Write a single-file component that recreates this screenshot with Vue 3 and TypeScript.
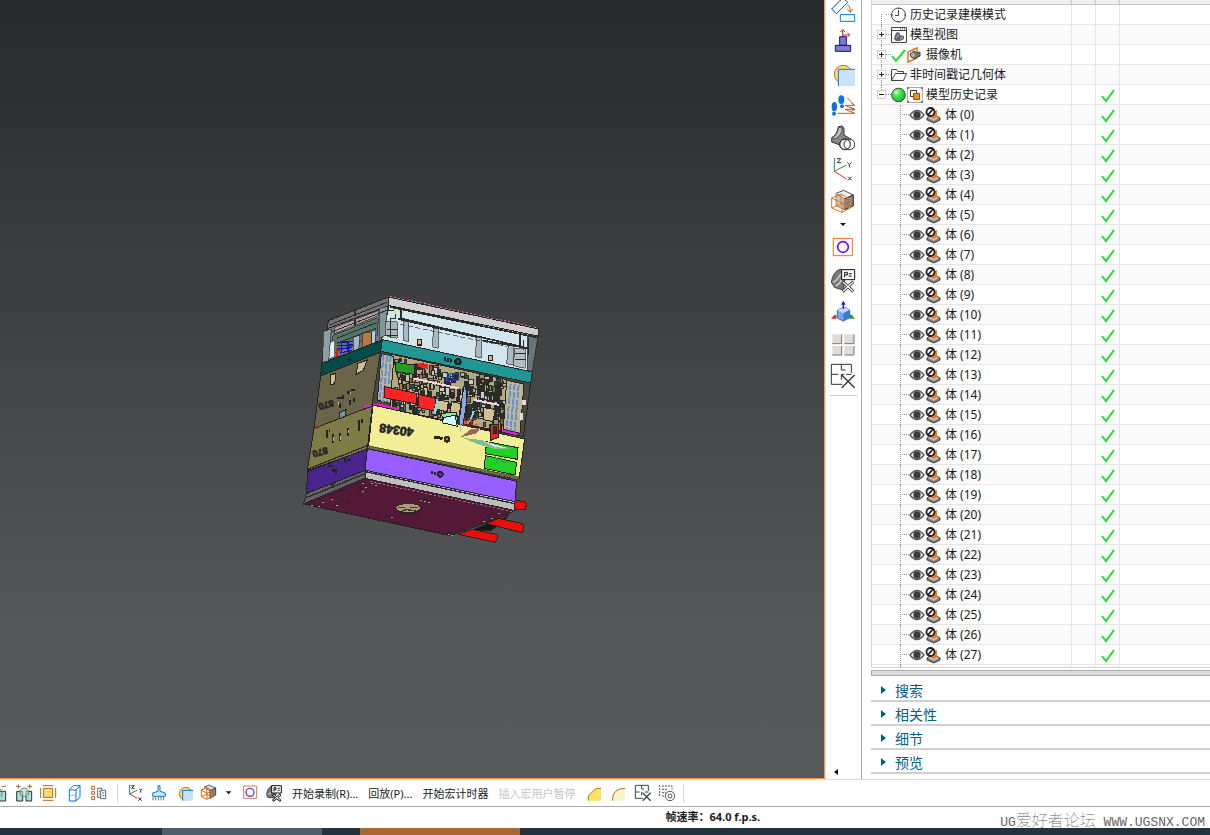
<script setup lang="ts">
interface Speck { x: number; y: number; w: number; h: number; fill: string }

const bodies: number[] = Array.from({ length: 28 }, (_, i) => i)
const sections: string[] = ['搜索', '相关性', '细节', '预览']

// Small machine parts seen through the open middle of the mould.
function buildSpecks(count: number): Speck[] {
  const fills = ['#2b2b2b', '#2b2b2b', '#d0c294', '#2b2b2b', '#9a8f68', '#d0c294', '#c9752e', '#0e5a5a', '#c8ccc8', '#2b2b2b', '#6d6650', '#b8ab80']
  let seed = 41
  const next = (): number => {
    seed = (seed * 1103515245 + 12345) % 2147483648
    return seed / 2147483648
  }
  return Array.from({ length: count }, () => {
    const u = next()
    const v = next()
    return {
      x: Math.round(308 + u * 335),
      y: Math.round(214 + u * 70 + v * 145),
      w: Math.round(5 + next() * 10),
      h: Math.round(6 + next() * 20),
      fill: fills[Math.floor(next() * fills.length)],
    }
  })
}
const specks = buildSpecks(300)
const bottomSpecks: number[][] = [
  [60, 655], [82, 659], [92, 647], [120, 638], [148, 642], [170, 651], [136, 655], [212, 614], [222, 602], [228, 618], [205, 606], [240, 590],
  [252, 596], [214, 589], [400, 643], [412, 646], [386, 640], [285, 690], [300, 692], [590, 690], [606, 684], [620, 680], [575, 703], [600, 695], [480, 745], [470, 742],
]
const sideMarks: number[][] = [
  [140, 335, 16, 8], [155, 330, 6, 12], [172, 318, 8, 8], [184, 313, 12, 5], [178, 345, 5, 14], [190, 340, 6, 12], [147, 355, 5, 14],
  [108, 436, 6, 24], [116, 432, 5, 10], [126, 448, 7, 26], [148, 445, 6, 22], [172, 430, 6, 24], [205, 405, 5, 32], [212, 402, 6, 12],
  [115, 540, 14, 5], [125, 552, 14, 8], [135, 548, 5, 18], [163, 516, 6, 18], [170, 522, 14, 5],
]
</script>

<template>
  <div class="app">
    <main class="workspace">
      <section class="viewport" aria-label="图形窗口">
        <svg class="model" viewBox="0 0 780 810" width="260" height="270" shape-rendering="crispEdges">
          <g stroke="#242424" stroke-width="3" stroke-linejoin="round">
            <path d="M548 735 600 712 640 700 655 690 640 712 600 738Z" fill="#1c1715" />
            <path d="M675 645 706 651Q712 663 704 675L672 672Z" fill="#f00b0b" />
            <path d="M590 716 625 700 698 716Q704 730 696 743Z" fill="#f00b0b" />
            <path d="M505 748 545 733 620 748Q626 760 616 772Z" fill="#f00b0b" />
            <path d="M112 130 297 60 275 165 95 235Z" fill="#71797b" />
            <path d="M297 60 745 150 725 262 275 165Z" fill="#d2e6ee" />
            <path d="M115 107 295 36 297 62 112 131Z" fill="#727272" />
            <path d="M295 36 746 132 744 153 297 62Z" fill="#cfcfcf" />
          </g>
          <g stroke="#2b2b2b" stroke-width="2">
            <path d="M132 128 267 76 265 92 134 146Z" fill="#b39da5" />
            <path d="M128 152 265 98 262 150 128 205Z" fill="#567468" />
            <path d="M110 176 134 166 134 215 106 226Z" fill="#e6eef2" />
            <path d="M268 70 292 64 288 150 268 160Z" fill="#84959a" />
            <path d="M100 140 124 132 116 228 98 232Z" fill="#8b9fa4" />
            <path d="M216 145Q230 138 244 143V180L216 190Z" fill="#bd793c" />
            <path d="M190 157 210 150 206 194 190 197Z" fill="#9fb7c4" />
            <path d="M245 140 257 134 256 172 245 177Z" fill="#a9d1ec" />
            <path d="M286 110H322V160L286 152Z" fill="#aab6bd" />
            <path d="M342 108H356V170L340 166ZM430 130H445V190L428 186ZM560 158H574V218L556 215ZM655 178H670V240L650 236Z" fill="#aabac3" />
            <path d="M674 190H706V250L670 242Z" fill="#b0bfc4" />
            <path d="M712 150 744 154 726 260 712 256Z" fill="#66757a" />
          </g>
          <g fill="none" stroke="#2b2b2b" stroke-width="3">
            <path d="M140 160 262 112M140 175 258 130M118 120 290 52M125 141 290 76" />
            <path d="M300 66 744 158" stroke-width="5" />
            <path d="M332 72V100L690 184V150" stroke-width="5" />
            <path d="M325 102 560 156M575 166 715 190" stroke-width="5" />
            <path d="M330 118 650 184" stroke-width="2" stroke-dasharray="16 7" />
            <path d="M290 75H315V100H300V160M290 132H324M288 150H324M676 205H708M674 222H708M716 160V210M700 165V195" />
            <path d="M194 75V92M196 100V124" stroke-width="6" />
          </g>
          <path d="M299 34 745 129" stroke="#ef6b9f" stroke-width="3" stroke-dasharray="6 7" />
          <path d="M146 172 188 170M140 182 190 180M142 192 186 188M150 204 186 196M154 167V205M174 167V202" stroke="#1712c5" stroke-width="4" />
          <path d="M140 190V215" stroke="#db1717" stroke-width="5" />
          <path d="M311 72h10v16h-10z" fill="#e1e58a" />
          <g fill="#e0b080" stroke="#242424" stroke-width="4"><path d="M383 164h12v16h-12zM596 211h12v16h-12z" /></g>

          <g stroke="#242424" stroke-width="3" stroke-linejoin="round">
            <path d="M92 273 272 200 245 365 72 430Z" fill="#6b6449" />
            <path d="M272 198 722 293 700 455 245 365Z" fill="#4a4a45" />
            <path d="M305 208 650 284 645 442 300 372Z" fill="#b3a880" />
          </g>
          <g stroke="#2b2b2b" stroke-width="3">
            <rect v-for="(s, i) in specks" :key="i" :x="s.x" :y="s.y" :width="s.w" :height="s.h" :fill="s.fill" />
          </g>
          <g stroke="#242424" stroke-width="3" stroke-linejoin="round">
            <path d="M95 236 277 164 273 201 92 273Z" fill="#044b4a" />
            <path d="M277 164 727 261 722 294 272 199Z" fill="#219694" />
            <path d="M274 206 312 214 300 355 262 345Z" fill="#c1b58b" />
            <path d="M650 286 702 297 690 445 640 432Z" fill="#c1b58b" />
            <path d="M316 232 372 240V268L316 260Z" fill="#249b24" />
            <path d="M440 345 475 350 470 380 436 372ZM484 350 512 356 508 396 482 380Z" fill="#cfc193" />
            <path d="M582 368 616 374 608 410 580 404Z" fill="#cfc193" />
          </g>
          <g stroke="#5f90e8" stroke-width="6" stroke-dasharray="18 4">
            <path d="M280 210 270 345M291 212 280 350M302 214 292 350M662 296 650 434M674 298 662 437M686 300 674 440" />
          </g>
          <path d="M695 345h14v14h-14zM690 385h8v20h-8z" fill="#e4dada" />
          <path d="M385 233 414 238V252L385 246Z" fill="#ee2020" />
          <path d="M370 280 505 310M552 345 628 360" stroke="#f3d6e4" stroke-width="6" />
          <g stroke="#242424" stroke-width="3">
            <path d="M284 305 380 325V357L282 338Z" fill="#ff2323" />
            <path d="M385 328 438 340 433 378 384 367Z" fill="#ff2323" />
            <path d="M455 385 498 382 504 410 458 405Z" fill="#9ce0a0" />
            <path d="M522 302Q532 310 530 350L518 430 510 425 514 350Z" fill="#8aa6e5" />
            <path d="M120 270 138 265 134 296 120 300Z" fill="#cdbd90" />
            <path d="M204 235 232 225 220 256 198 268Z" fill="#cdbd90" />
            <path d="M150 382 168 374 163 408 148 412Z" fill="#6b9aa5" />
          </g>
          <path d="M430 385 440 342 444 346 438 388ZM536 410 548 382 556 375 542 412Z" fill="#68e7ea" />
          <path d="M225 364H242L262 358 324 372" fill="none" stroke="#f218dc" stroke-width="6" />

          <g stroke="#242424" stroke-width="3" stroke-linejoin="round">
            <path d="M72 430 247 363 232 492 52 557Z" fill="#7e7b46" />
            <path d="M249 360 704 462 687 582 235 490Z" fill="#f1ee96" />
            <path d="M52 560 232 491 226 557 50 625Z" fill="#4a248d" />
            <path d="M232 491 680 589 675 650 225 556Z" fill="#975fff" />
            <path d="M50 625 226 556 225 582 40 657Z" fill="#616161" />
            <path d="M226 556 675 650 672 678 225 582Z" fill="#bfbfbf" />
            <path d="M40 657 225 580 672 676 650 690 480 752Z" fill="#531936" />
          </g>
          <path d="M636 437 680 447" stroke="#f218dc" stroke-width="6" />
          <g fill="none" stroke="#2b2b2b" stroke-width="4">
            <path d="M234 486 688 580" stroke="#706b3b" stroke-width="7" />
            <path d="M234 482 688 576M234 492 688 586" stroke-width="2" />
            <path d="M226 560 674 656M54 552 232 482M44 640 225 566" />
            <path d="M240 590 670 680" stroke="#e28daf" stroke-width="2" stroke-dasharray="7 6" />
            <path d="M60 655 215 593M62 660 480 750" stroke="#302029" stroke-width="3" stroke-dasharray="20 5" />
          </g>
          <g v-for="(b, i) in bottomSpecks" :key="'b' + i">
            <rect :x="b[0]" :y="b[1]" width="10" height="6" fill="#292426" />
            <rect :x="b[0] + 3" :y="b[1] + 5" width="6" height="2" fill="#d58aa8" />
          </g>
          <rect v-for="(m, i) in sideMarks" :key="'m' + i" :x="m[0]" :y="m[1]" :width="m[2]" :height="m[3]" fill="#252525" />
          <path d="M130 456v12M152 452v12M176 434v10M182 320v8M146 350v10" stroke="#c8ba83" stroke-width="4" />
          <path d="M78 430 90 424" stroke="#b62626" stroke-width="5" />
          <text class="engraved side-mark" transform="translate(128 344) rotate(164)">870</text>
          <text class="engraved side-mark" transform="translate(110 486) rotate(164)">870</text>
          <text class="engraved number" transform="translate(372 430) rotate(188)">40348</text>
          <path d="M462 222 488 228" stroke="#242424" stroke-width="13" stroke-dasharray="6 3" />
          <circle cx="504" cy="230" r="11" fill="#252525" />
          <circle cx="504" cy="230" r="4" fill="#1a6b6c" />
          <path d="M433 457 458 460M423 563 446 567" stroke="#242424" stroke-width="9" stroke-dasharray="7 2" />
          <circle cx="471" cy="463" r="10" fill="#302f23" /><circle cx="471" cy="463" r="4" fill="#9b9460" />
          <circle cx="451" cy="568" r="10" fill="#26213c" /><circle cx="451" cy="568" r="4" fill="#633bae" />
          <path d="M172 222 184 216V228L174 232Z" fill="#153131" />
          <path d="M120 598 134 594 130 612Z" fill="#303030" />
          <ellipse cx="355" cy="673" rx="37" ry="15" fill="#282522" />
          <ellipse cx="355" cy="669" rx="36" ry="12" fill="#aa9d74" />
          <path d="M324 668H346M360 668H384M335 677 350 674 378 677" fill="none" stroke="#403a2b" stroke-width="4" />
          <g stroke="#242424" stroke-width="3">
            <path d="M590 470 684 488 682 523 586 506Z" fill="#22d123" />
            <path d="M586 512 680 532 675 570 583 550Z" fill="#22d123" />
            <path d="M603 417H624V458L602 466Z" fill="#e12424" />
            <path d="M609 425H618V445H609Z" fill="#333" />
            <path d="M462 397 495 391 502 424 456 413Z" fill="#c7fff9" />
          </g>
          <path d="M511 457 545 431 570 430 560 445Z" fill="#99665d" />
          <path d="M519 459 575 465 620 480 660 491 620 493 570 480Z" fill="#82bd91" />
          <path d="M575 466 620 480 658 490 615 486Z" fill="#c9f0d0" />
          <path d="M511 390V440" stroke="#9eb5f2" stroke-width="5" />
          <text class="axis" x="466" y="287" fill="#1b4fe3">ZC</text>
          <text class="axis" x="517" y="422" fill="#df2424">XC</text>
          <text class="axis" x="610" y="533" fill="#31a43a">YC</text>
        </svg>
      </section>

      <nav class="rail" aria-label="视图工具">
        <button type="button" aria-label="移动对象">
          <svg viewBox="48 -3 72 72" fill="none" stroke="#0b76d8" stroke-width="3"><path d="M50 27 84-7 98 7 64 41Z" stroke="#666" /><path d="M50 27 84-7 98 7 64 41Z" stroke-dasharray="7 4" /><path d="M76 44H119V64H76Z" /><path d="M96 15Q106 16 106 36M98 28 106 37 113 28" stroke="#b5651a" /></svg>
        </button>
        <button type="button" aria-label="拉出面">
          <svg viewBox="48 93 72 72" stroke="#12127f" stroke-width="3"><path d="M74 110H94V136H74ZM61 136H107V154H61Z" fill="#7c7ccc" /><path d="M83 109V90M76 96 83 89 90 96M83 105H103M97 98 104 105 97 111" fill="none" stroke="#e2212c" /></svg>
        </button>
        <button type="button" aria-label="替换面">
          <svg viewBox="48 189 72 72" stroke-width="3"><circle cx="85" cy="223" r="27" fill="#ffdb80" stroke="#b67524" /><path d="M70 208H120V258H70Z" fill="#c6e2ff" /><path d="M70 258V208H120" fill="none" stroke="#0b76d8" /></svg>
        </button>
        <button type="button" aria-label="动画">
          <svg viewBox="48 285 72 72"><g fill="#0b76d8"><ellipse cx="79" cy="299" rx="9" ry="13" /><circle cx="81" cy="319" r="6" /><ellipse cx="58" cy="320" rx="8" ry="14" /><circle cx="57" cy="341" r="6" /></g><path d="M97 294 119 316H90L119 328H90L119 340H67M109 309 119 316M107 322 119 328 109 334" fill="none" stroke="#b5651a" stroke-width="3" /></svg>
        </button>
        <button type="button" aria-label="布尔">
          <svg viewBox="48 21 72 72" stroke="#333" stroke-width="3"><path d="M50 53Q66 46 70 20L82 18 87 25V45L108 58 102 75H75L50 66Z" fill="#858585" /><path d="M71 22 82 25Q80 46 60 57L52 54Q68 44 71 22Z" fill="#c4c4c4" stroke-width="2" /><circle cx="90" cy="73" r="16" fill="#eee" /><circle cx="103" cy="73" r="16" fill="#fff" fill-opacity=".6" /><circle cx="90" cy="73" r="16" fill="none" /></svg>
        </button>
        <button type="button" aria-label="坐标系">
          <svg viewBox="48 117 72 72" fill="none" stroke-width="3"><path d="M58 154V114" stroke="#287f9b" /><path d="M58 154 94 135" stroke="#23a12b" /><path d="M58 154 95 177" stroke="#e22a3d" /><path d="M66 116H77L67 128H78M97 127 103 134 110 127M103 134V142M99 170 110 181M110 170 99 181" stroke="#333" /></svg>
        </button>
        <button type="button" aria-label="显示方式">
          <svg viewBox="48 213 72 72" stroke-width="3"><path d="M63 220 86 211 115 225 88 237Z" fill="#eee" stroke="#555" /><path d="M88 237 115 225V258L88 269Z" fill="#828282" stroke="#333" /><path d="M63 220 88 237V269L63 257Z" fill="#c6c6c6" stroke="#888" /><path d="M50 234 78 222 106 238 81 249ZM50 234V264L81 277V249M106 238V264L81 277M78 222V252L50 264M78 252 106 264" fill="none" stroke="#ed750d" /></svg>
        </button>
        <button type="button" class="rail-caret" aria-label="更多显示方式"><svg viewBox="0 0 6 4"><path d="M0 0H6L3 3Z" fill="#111" /></svg></button>
        <button type="button" aria-label="圆形">
          <svg viewBox="48 0 72 72" fill="none"><path d="M55 10H112V62H55Z" stroke="#ff6a24" stroke-width="3" /><circle cx="84" cy="36" r="16" stroke="#7900ff" stroke-width="5" /></svg>
        </button>
        <button type="button" aria-label="移除参数">
          <svg viewBox="48 96 72 72"><path d="M49 141Q54 108 78 102L91 116 86 166 58 157Z" fill="#777" stroke="#444" stroke-width="3" /><path d="M53 141Q64 141 78 116M62 153Q76 146 84 125" fill="none" stroke="#ccc" stroke-width="5" /><path d="M80 104H119V134H80Z" fill="#fff" stroke="#111" stroke-width="3" /><path d="M89 127V112H97V120H90M101 116H110M101 123H110" fill="none" stroke="#111" stroke-width="3" /><path d="M83 140 115 170M115 140 83 170" stroke="#333" stroke-width="9" /><path d="M84 141 114 169M114 141 84 169" stroke="#fff" stroke-width="4" /></svg>
        </button>
        <button type="button" aria-label="动态坐标系">
          <svg viewBox="48 192 72 72"><path d="M67 226 88 216 104 225V248L85 258 67 249Z" fill="#75a9eb" stroke="#3465ae" stroke-width="3" /><path d="M67 226 88 216 104 225 85 235Z" fill="#c1dcff" /><path d="M85 235 104 225V248L85 258Z" fill="#427bd0" /><path d="M85 222V204" stroke="#1624cf" stroke-width="4" /><path d="M78 209 85 197 92 209Z" fill="#1624cf" /><path d="M65 243 57 247M105 240 113 245" stroke="#555" stroke-width="4" /><path d="M48 251 61 238 65 251Z" fill="#e62121" /><path d="M120 251 107 238 103 251Z" fill="#1aa525" /></svg>
        </button>
        <button type="button" aria-label="四视图">
          <svg viewBox="48 288 72 72"><path d="M52 298H80V326H52ZM88 298H117V326H88ZM52 333H80V360H52ZM88 333H117V360H88Z" fill="#dedbdb" /><path d="M80 298V326H52M117 298V326H88M80 333V360H52M117 333V360H88" fill="none" stroke="#777" stroke-width="3" /></svg>
        </button>
        <button type="button" aria-label="删除布局">
          <svg viewBox="48 384 72 72" fill="none" stroke="#333" stroke-width="3"><path d="M82 448H49V388H109V414M49 418H70M79 388V405H92M79 418V434M94 418H109M79 418H88" /><path d="M80 420 119 458M119 420 80 458" stroke-width="4" /></svg>
        </button>
        <hr />
        <button type="button" class="rail-back" aria-label="收起"><svg viewBox="0 0 4 6"><path d="M4 0V6L0 3Z" fill="#111" /></svg></button>
      </nav>

      <aside class="panel">
        <div class="tree-box">
          <table class="tree">
            <colgroup><col class="c-name" /><col class="c-small" /><col class="c-small" /><col /></colgroup>
            <thead><tr><th></th><th></th><th></th><th></th></tr></thead>
            <tbody>
              <tr>
                <td><div class="node first"><i class="no-toggle"></i><i class="dots"></i>
                  <svg class="ico" viewBox="0 0 16 16" fill="none" stroke="#444"><circle cx="7.500" cy="8" r="7" /><path d="M7.500 3V8.500H4M7.500 1V2M7.500 14V15M1 8H2M13 8H14" /></svg><span>历史记录建模模式</span></div></td>
                <td></td><td></td><td></td>
              </tr>
              <tr>
                <td><div class="node"><button type="button" class="toggle" aria-label="展开 模型视图"></button><i class="dots"></i>
                  <svg class="ico" viewBox="0 0 16 16"><path d="M.5 .5H15.5V15.5H.5ZM.5 3.5H15.5" fill="none" stroke="#444" /><path d="M9 2H10M11 2H12M13 2H14" stroke="#444" /><path d="M3 12Q3 8 6 5L9 6V8L13 9V12L9 14H5Z" fill="#666" /><path d="M5 11Q8 9 7 7M9 11Q11 12 12 10" stroke="#bbb" fill="none" /></svg><span>模型视图</span></div></td>
                <td></td><td></td><td></td>
              </tr>
              <tr>
                <td><div class="node"><button type="button" class="toggle" aria-label="展开 摄像机"></button><i class="dots"></i>
                  <svg class="ico" viewBox="0 0 16 16"><path d="M1 9 5 14 14 3" fill="none" stroke="#25dc32" stroke-width="2" /></svg>
                  <svg class="ico" viewBox="0 0 16 16"><path d="M1 5 10 1V11L1 15Z" fill="#fff" stroke="#e57818" stroke-width="1.500" /><path d="M3 7 7 4 10 6 13 5V9L10 10 8 12 4 10Z" fill="#777" stroke="#444" /><circle cx="6" cy="8" r="2" fill="#c8b29e" /></svg><span>摄像机</span></div></td>
                <td></td><td></td><td></td>
              </tr>
              <tr>
                <td><div class="node"><button type="button" class="toggle" aria-label="展开 非时间戳记几何体"></button><i class="dots"></i>
                  <svg class="ico" viewBox="0 0 16 16" fill="none" stroke="#444"><path d="M.5 13.5V2.5H5.5L7 4.5H12.5V6.5M.5 13.5 4.5 6.5H15.5L12.5 13.5Z" /></svg><span>非时间戳记几何体</span></div></td>
                <td></td><td></td><td></td>
              </tr>
              <tr>
                <td><div class="node last"><button type="button" class="toggle open" aria-label="收起 模型历史记录"></button><i class="dots"></i>
                  <svg class="ico" viewBox="0 0 16 16"><defs><radialGradient id="ball" cx=".35" cy=".3" r=".7"><stop offset="0" stop-color="#d5ffd4" /><stop offset=".35" stop-color="#4eea51" /><stop offset="1" stop-color="#17ba29" /></radialGradient></defs><circle cx="7.500" cy="8" r="6.800" fill="url(#ball)" stroke="#444" /></svg>
                  <svg class="ico" viewBox="0 0 16 16" fill="none"><path d="M.5 .5H15.5V15.5H.5Z" stroke="#aaa" /><path d="M0 0H2V2H0ZM14 0H16V2H14ZM0 14H2V16H0ZM14 14H16V16H14Z" fill="#777" /><path d="M3.500 3.500H9.500V9.500H3.500Z" stroke="#333" /><path d="M6.500 6.500H12.500V12.500H6.500Z" fill="#f28b18" stroke="#a45307" /></svg><span>模型历史记录</span></div></td>
                <td></td><td></td><td></td>
              </tr>
              <tr v-for="n in bodies" :key="n">
                <td><div class="node child"><i class="dots"></i>
                  <svg class="ico" viewBox="0 0 16 16"><path d="M1 8Q8 -1 15 8Q8 17 1 8Z" fill="#fff" stroke="#555" stroke-width="1.300" /><circle cx="8" cy="8" r="3.700" fill="#3c3c3c" /></svg>
                  <svg class="ico" viewBox="0 0 16 16"><path d="M2 11 8 7 15 11V13L9 16 2 13Z" fill="#777" stroke="#444" /><path d="M3 11 8 8 14 11 9 14Z" fill="#c4c4c4" /><path d="M7 5 12 3V10L9 12 5 10Z" fill="#ec7d22" /><circle cx="5.500" cy="5" r="4" fill="#fff" stroke="#222" stroke-width="1.800" /><path d="M8 2 3 8" stroke="#222" stroke-width="1.800" /></svg><span>体 ({{ n }})</span></div></td>
                <td></td><td></td><td></td>
              </tr>
              <tr><td><div class="node child"></div></td><td></td><td></td><td></td></tr>
            </tbody>
          </table>
        </div>
        <div class="splitter"></div>
        <div class="sections">
          <button v-for="s in sections" :key="s" type="button" class="section">
            <svg viewBox="0 0 5 8"><path d="M0 0 5 4 0 8Z" fill="#005f87" /></svg><span>{{ s }}</span>
          </button>
        </div>
      </aside>
    </main>

    <footer>
      <div class="tools">
        <button type="button" class="half" aria-label="约束"><svg viewBox="0 42 36 54" fill="none" stroke-width="3"><path d="M0 64H17V93H0" fill="#a6ded0" stroke="#333" /><path d="M0 57Q10 62 3 80" stroke="#777" /><path d="M5 49H18" stroke="#b5651a" /></svg></button>
        <button type="button" aria-label="装配约束"><svg viewBox="36 42 72 54" stroke-width="3"><path d="M50 64H68V93H50ZM78 64H95V93H78Z" fill="#a6ded0" stroke="#333" /><circle cx="73" cy="67" r="13" fill="#a6ded0" fill-opacity=".6" stroke="#777" /><path d="M48 49H62M55 43V56M82 49H96M89 43V56" stroke="#b5651a" /></svg></button>
        <button type="button" aria-label="适合窗口"><svg viewBox="108 42 72 54" stroke="#b5651a" stroke-width="3"><path d="M131 55H158V82H131Z" fill="#ffe066" /><path d="M129 47H160M129 91H160M122 54V84M167 54V84" /></svg></button>
        <button type="button" aria-label="长方体"><svg viewBox="180 42 72 54" fill="none" stroke="#0b76d8" stroke-width="3"><path d="M208 60H228V93H208ZM208 60 220 47H240L228 60M240 47V80L228 93" /><path d="M211 76H227" stroke="#777" stroke-dasharray="3 3" /></svg></button>
        <button type="button" aria-label="复制列表"><svg viewBox="252 42 72 54" fill="none" stroke-width="3"><path d="M275 49H284V58H275ZM275 65H284V73H275ZM275 80H284V89H275Z" stroke="#b5651a" /><path d="M302 82H293V55H306V59M302 61H317V86H302ZM306 69H313M306 77H313M297 64H300M297 72H300" stroke="#666" /></svg></button>
        <i class="sep"></i>
        <button type="button" aria-label="坐标系"><svg viewBox="369 42 72 54" fill="none" stroke-width="3"><path d="M389 72V44" stroke="#287f9b" /><path d="M389 72 412 60" stroke="#23a12b" /><path d="M389 72 412 85" stroke="#e22a3d" /><path d="M394 47H403L395 55H404M418 56 422 61 427 56M422 61V68M415 83 425 92M425 83 415 92" stroke="#333" /></svg></button>
        <button type="button" aria-label="清理"><svg viewBox="441 42 72 54" fill="none" stroke-width="3"><path d="M474 64V47H480V64L496 69V79H458V69Z" fill="#d3e9ff" stroke="#0b76d8" /><path d="M459 81V91M467 81V91M475 81V91M483 81V91M491 81V91" stroke="#b5651a" /></svg></button>
        <button type="button" aria-label="替换面"><svg viewBox="513 42 72 54" stroke-width="3"><circle cx="557" cy="71" r="19" fill="#ffdb80" stroke="#b67524" /><path d="M548 61H579V92H548Z" fill="#c6e2ff" /><path d="M548 92V61H579" fill="none" stroke="#0b76d8" /></svg></button>
        <button type="button" aria-label="显示方式"><svg viewBox="585 42 72 54" stroke-width="3"><path d="M612 51 627 45 647 54 630 63Z" fill="#ddd" stroke="#666" /><path d="M630 63 647 54V75L630 85Z" fill="#888" stroke="#444" /><path d="M604 60 620 53 637 62 621 70ZM604 60V80L621 88V70M637 62V80L621 88M620 53V73L604 80M620 73 637 80" fill="none" stroke="#e1670f" /></svg></button>
        <button type="button" class="more" aria-label="更多"><svg viewBox="657 42 45 54"><path d="M677 64H694L686 73Z" fill="#111" /></svg></button>
        <button type="button" aria-label="圆形"><svg viewBox="702 42 72 54" fill="none" stroke-width="3"><path d="M731 48H770V85H731Z" stroke="#cf7d63" /><circle cx="750" cy="67" r="12" stroke="#7538d5" stroke-width="4" /></svg></button>
        <button type="button" aria-label="移除参数"><svg viewBox="774 42 72 54"><path d="M800 74Q802 51 819 47L829 66 824 84 803 82Z" fill="#777" stroke="#444" stroke-width="3" /><path d="M804 73Q814 70 818 55" fill="none" stroke="#bbb" stroke-width="4" /><path d="M815 47H844V69H815Z" fill="#fff" stroke="#111" stroke-width="3" /><path d="M822 64V53H828V59H822M833 55H839M833 61H839" fill="none" stroke="#111" stroke-width="3" /><path d="M818 73 842 93M842 73 818 93" stroke="#222" stroke-width="7" /><path d="M820 75 840 91M840 75 820 91" stroke="#fff" stroke-width="3" /></svg></button>
        <div class="macros">
          <button type="button">开始录制(R)...</button>
          <button type="button">回放(P)...</button>
          <button type="button">开始宏计时器</button>
          <button type="button" disabled>插入宏用户暂停</button>
        </div>
        <button type="button" aria-label="倒斜角"><svg viewBox="36 42 72 54"><path d="M55 92V78L78 55H93V92Z" fill="#ffe06b" /><path d="M55 92V78L78 55H93" fill="none" stroke="#c46b1c" stroke-width="3" /></svg></button>
        <button type="button" aria-label="边倒圆"><svg viewBox="108 42 72 54"><path d="M127 92Q127 55 165 55V92Z" fill="#fff2cc" /><path d="M127 92Q127 55 165 55" fill="none" stroke="#c46b1c" stroke-width="3" /></svg></button>
        <button type="button" aria-label="删除布局"><svg viewBox="180 42 72 54" fill="none" stroke="#444" stroke-width="3"><path d="M219 85H196V46H235V63M196 66H209M215 46V57H222M215 66V76M225 66H235" /><path d="M218 68 242 92M242 68 218 92" stroke-width="4" /></svg></button>
        <button type="button" aria-label="设置"><svg viewBox="252 42 72 54" fill="none" stroke="#555" stroke-width="3"><path d="M269 45V82M276 48H306V58M276 58H294M276 68H288M276 78H283" stroke-dasharray="6 3" /><circle cx="300" cy="78" r="14" fill="#fff" /><circle cx="300" cy="78" r="6" /></svg></button>
        <i class="sep end"></i>
      </div>
      <div class="status">
        <strong>帧速率：64.0 f.p.s.</strong>
        <div class="watermark"><span>UG</span>爱好者论坛<span>&nbsp;WWW.UGSNX.COM</span></div>
      </div>
      <div class="taskbar"><i class="task grey"></i><i class="task gap"></i><i class="task orange"></i></div>
    </footer>
  </div>
</template>

<style>
body { margin: 0; overflow: hidden; }
</style>

<style scoped>
.app { display: flex; flex-direction: column; height: 100vh; background: #fff; color: #1b1b1b; font-family: "Noto Sans", "Noto Sans CJK SC", sans-serif; font-size: 12px; }
button { display: block; flex: none; padding: 0; border: 0; background: none; color: inherit; font: inherit; }
svg { display: block; overflow: visible; }
i { display: block; flex: none; }
.workspace { display: flex; flex: 1; min-height: 0; }
.viewport { position: relative; flex: 1; min-width: 0; overflow: hidden; border-right: 1px solid #f79a3c; border-bottom: 1px solid #f79a3c; background: linear-gradient(#28292b 0%, #3d3e40 37%, #505153 70%, #555658 80%, #575859 100%); }
.model { position: absolute; left: 290px; top: 285px; }
.axis { font: 33px "Liberation Sans", sans-serif; }
.engraved { font-family: "Liberation Sans", sans-serif; font-weight: bold; fill: #252525; stroke: #252525; stroke-width: 2px; }
.number { font-size: 37px; }
.side-mark { font-size: 28px; }

.rail { display: flex; flex: none; flex-direction: column; align-items: center; gap: 8px; box-sizing: border-box; width: 37px; padding-right: 1px; overflow: hidden; border-left: 1px solid #e3e3e8; border-right: 1px solid #ababab; background: #fff; }
.rail button, .rail svg { width: 24px; height: 24px; flex: none; }
.rail button:first-child { margin-top: -1px; }
.rail .rail-caret, .rail .rail-caret svg { width: 6px; height: 4px; }
.rail .rail-back { margin: auto 15px 4px 0; }
.rail .rail-back, .rail .rail-back svg { width: 4px; height: 6px; }
.rail hr { width: 27px; height: 1px; margin: 0; border: 0; background: #ccc; }

.panel { display: flex; flex: none; flex-direction: column; box-sizing: border-box; width: 348px; padding: 0 0 5px 9px; }
.tree-box { flex: 1; min-height: 0; overflow: hidden; border-left: 1px solid #d5d5d5; border-bottom: 1px solid #d5d5d5; }
.tree { width: 100%; table-layout: fixed; border-spacing: 0; }
.c-name { width: 200px; }
.c-small { width: 24px; }
.tree th { box-sizing: border-box; height: 5px; padding: 0; border-right: 1px solid #c4c4c4; border-bottom: 1px solid #c4c4c4; background: #efefef; }
.tree td { box-sizing: border-box; height: 20px; padding: 0; border-right: 1px solid #e6e6e6; border-bottom: 1px solid #e6e6e6; }
.tree th:last-child, .tree td:last-child { border-right: 0; }
.tree tbody tr:nth-child(even) { background: #fafafa; }
.tree tbody tr:nth-child(n + 5):not(:last-child) td:nth-child(3) { background: url("data:image/svg+xml,%3Csvg xmlns='http://www.w3.org/2000/svg' width='16' height='16'%3E%3Cpath d='M2 8 6 13 14 2' fill='none' stroke='%2325dc32' stroke-width='2'/%3E%3C/svg%3E") center 3px no-repeat; }
.node { display: flex; position: relative; align-items: center; height: 19px; padding-left: 5px; line-height: 19px; white-space: nowrap; }
.node span { padding-left: 3px; }
.node::before { content: ""; position: absolute; left: 9px; top: 0; bottom: -1px; border-left: 1px dotted #999; }
.node.first::before { top: 9px; }
.node.last::before { bottom: 10px; }
.node.child { padding-left: 30px; }
.node.child::before { left: 28px; }
.node.child .dots { width: 7px; }
.node.child span { padding-left: 4px; }
.node .ico { flex: none; width: 16px; height: 16px; }
.dots { width: 5px; border-top: 1px dotted #999; }
.no-toggle { width: 9px; }
.toggle { position: relative; box-sizing: border-box; width: 9px; height: 9px; border: 1px solid #d0d0d0; background: #fff; }
.toggle::before { content: ""; position: absolute; left: 1px; top: 3px; width: 5px; height: 1px; background: #222; }
.toggle:not(.open)::after { content: ""; position: absolute; left: 3px; top: 1px; width: 1px; height: 5px; background: #222; }
.splitter { flex: none; box-sizing: border-box; height: 6px; margin: 2px 0; border: 1px solid #aaa; border-right: 0; background: #dcdcdc; }
.section { display: flex; align-items: center; box-sizing: border-box; width: 100%; height: 24px; padding: 2px 0 0 10px; gap: 9px; border-bottom: 2px solid #d0d0d0; color: #005f87; font-size: 14px; line-height: 22px; }
.section svg { width: 5px; height: 8px; }
.section span { padding-top: 2px; line-height: 20px; }

.tools { display: flex; align-items: center; height: 26px; border-top: 1px solid #d8dce2; border-bottom: 1px solid #ababab; font-size: 11px; }
.tools svg { width: 24px; height: 18px; }
.tools .half, .half svg { width: 12px; }
.tools .more, .more svg { width: 15px; }
.sep { width: 1px; height: 18px; margin: 0 5px 0 9px; background: #d8d8d8; }
.sep.end { margin-left: 5px; }
.macros { display: flex; gap: 10px; padding: 0 7px 0 10px; }
.macros button:disabled { color: #c6c6c6; }
.status { display: flex; justify-content: flex-end; height: 21px; line-height: 20px; }
.status strong { margin-right: 240px; font-size: 11px; }
.watermark { margin-right: 5px; color: #666; font-family: "Noto Sans CJK SC", sans-serif; font-size: 16px; font-weight: 100; line-height: 24px; white-space: nowrap; }
.watermark span { font-family: "Liberation Mono", monospace; font-size: 13px; }
.taskbar { display: flex; height: 7px; padding-left: 162px; background: #23323b; }
.task.grey { width: 160px; background: #515d67; }
.task.gap { width: 38px; }
.task.orange { width: 160px; background: #a96831; }
</style>
